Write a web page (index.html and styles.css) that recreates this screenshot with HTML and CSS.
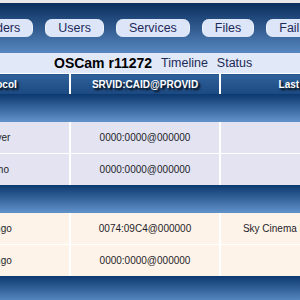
FILE: index.html
```html
<!DOCTYPE html>
<html lang="en">
<head>
  <meta charset="UTF-8" />
  <title>OSCam Status</title>
  <link rel="stylesheet" href="styles.css">
</head>
<body>
  <div class="page">

    <!-- menu -->
    <div class="menu">
      <a class="menu-btn">Readers</a>
      <a class="menu-btn">Users</a>
      <a class="menu-btn">Services</a>
      <a class="menu-btn">Files</a>
      <a class="menu-btn">Failban</a>
      <a class="menu-btn">Script</a>
    </div>

    <!-- sub menu -->
    <div class="titlebar">
      <span class="version">OSCam r11272</span>
      <a class="sub-link">Timeline</a>
      <a class="sub-link">Status</a>
    </div>

    <!-- status table -->
    <table class="status">
      <colgroup>
        <col class="c-proto">
        <col class="c-srvid">
        <col class="c-last">
      </colgroup>
      <thead>
        <tr>
          <th>Protocol</th>
          <th>SRVID:CAID@PROVID</th>
          <th>Last Channel</th>
        </tr>
      </thead>
      <tbody class="readers">
        <tr class="sep"><td colspan="3"></td></tr>
        <tr><td>server</td><td>0000:0000@000000</td><td></td></tr>
        <tr><td>demo</td><td>0000:0000@000000</td><td></td></tr>
      </tbody>
      <tbody class="proxies">
        <tr class="sep"><td colspan="3"></td></tr>
        <tr><td>mango</td><td>0074:09C4@000000</td><td>Sky Cinema Premieren +1 HD</td></tr>
        <tr><td>mango</td><td>0000:0000@000000</td><td></td></tr>
      </tbody>
      <tbody class="readers">
        <tr class="sep"><td colspan="3"></td></tr>
      </tbody>
    </table>

  </div>
</body>
</html>
```

FILE: styles.css
```css
body {
  margin: 0;
  background-color: #e8e8e8;
  font-family: "Liberation Sans", Arial, sans-serif;
  overflow: hidden;
}

.page {
  margin-left: -76px;
  width: 580px;
  padding-top: 3px;
}

/* menu */
.menu {
  display: flex;
  gap: 12px;
  height: 50px;
  padding: 16px 0 0 36px;
  box-sizing: border-box;
  background: linear-gradient(#0a2e5d, #5787c0);
}

.menu-btn {
  height: 18px;
  line-height: 18px;
  padding: 0 12px;
  font-size: 12.5px;
  color: #1f2a5c;
  background-color: #dde6f8;
  border: 1px solid #eef2fb;
  border-top: 0;
  border-bottom: 0;
  border-radius: 7px;
  white-space: nowrap;
}

/* sub menu */
.titlebar {
  display: flex;
  align-items: center;
  gap: 9px;
  height: 20px;
  padding-left: 130px;
  background-color: #e1e8f8;
  font-size: 12.5px;
  color: #1c2856;
}

.version {
  font-weight: bold;
  font-size: 14px;
  color: #000;
}

/* status table */
.status {
  border-collapse: collapse;
  table-layout: fixed;
  width: 476px;
  border-top: 1px solid #fff;
  font-size: 10px;
  color: #1e1e2a;
}

.c-proto { width: 146px; }
.c-srvid { width: 150px; }
.c-last  { width: 180px; }

.status th {
  height: 20px;
  padding: 0;
  background: linear-gradient(#31629b, #1b4880);
  color: #fff;
  font-weight: bold;
  text-shadow: 2px 2px 2px #000;
  white-space: nowrap;
  overflow: hidden;
  border-right: 2px solid #fff;
}

.status td {
  height: 31px;
  padding: 0;
  text-align: center;
  white-space: nowrap;
  overflow: hidden;
  border-right: 2px solid #fff;
  border-bottom: 1px solid #fff;
}

.status tr:last-child td {
  border-bottom: 0;
}

.status .sep td {
  height: 28px;
  border: 0;
  background: linear-gradient(#0b386f, #6192ca);
}

.readers td { background-color: #e3e3f1; }
.proxies td { background-color: #fef3e8; }
```
